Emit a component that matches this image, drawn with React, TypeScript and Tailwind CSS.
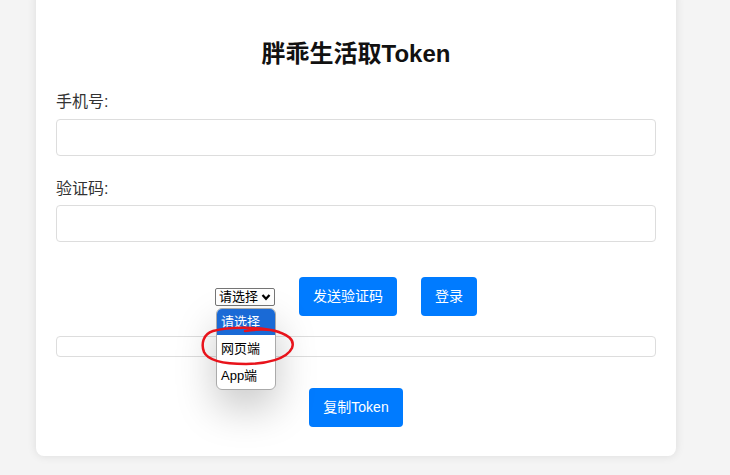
import React from 'react';

const font = { fontFamily: '"Liberation Sans", "Noto Sans CJK SC", sans-serif' };

function App() {
  return (
    <div className="min-h-screen bg-[#f4f4f4] overflow-hidden" style={font}>
      <div className="ml-[36px] w-[640px] -mt-[10px] bg-white rounded-lg shadow-[0_0_10px_rgba(0,0,0,0.1)] px-5 pt-[50px] pb-[29px]">
        <h2 className="text-center text-[24px] leading-[28px] font-bold text-[#111]">胖乖生活取Token</h2>

        <label className="block mt-[22px] text-[16px] leading-[24px] text-[#333]">手机号:</label>
        <input className="block mt-[5px] w-full h-[37px] border border-[#ddd] rounded" />

        <label className="block mt-[21px] text-[16px] leading-[24px] text-[#333]">验证码:</label>
        <input className="block mt-[4px] w-full h-[37px] border border-[#ddd] rounded" />

        <div className="mt-[35px] flex items-center justify-center gap-6 pr-[20px]">
          <div className="relative">
            <div className="flex items-center gap-[3px] h-[18px] pl-[3px] pr-[3px] border border-[#767676] rounded-[2px] text-[13px] leading-[16px] text-black">
              请选择
              <svg width="10" height="10" viewBox="0 0 10 10">
                <path d="M1.5 3 L5 6.8 L8.5 3" fill="none" stroke="#000" strokeWidth="2.2" />
              </svg>
            </div>
            <div className="absolute left-[1px] top-[20px] w-[60px] bg-white border border-[#aaa] rounded-[6px] overflow-hidden shadow-[0_18px_40px_rgba(0,0,0,0.22)] text-[13px] text-black z-10">
              <div className="h-[26px] leading-[26px] px-[4px] bg-[#1a6ad6] text-white">请选择</div>
              <div className="h-[27px] leading-[27px] px-[4px]">网页端</div>
              <div className="h-[27px] leading-[27px] px-[4px]">App端</div>
            </div>
            <svg className="absolute left-[-14px] top-[36px] z-20 pointer-events-none" width="96" height="44" viewBox="0 0 96 44">
              <path
                d="M78 8 C62 3 30 2 12 7 C2 10 0 20 3 28 C7 37 25 40 45 40 C65 40 86 35 91 24 C94 16 88 10 70 6 C62 5 50 6 44 7"
                fill="none"
                stroke="#e8131b"
                strokeWidth="2.5"
                strokeLinecap="round"
              />
            </svg>
          </div>
          <button className="h-[39px] px-[14px] bg-[#007bff] text-white text-[14px] rounded">发送验证码</button>
          <button className="h-[39px] px-[14px] bg-[#007bff] text-white text-[14px] rounded">登录</button>
        </div>

        <div className="mt-[20px] h-[21px] border border-[#ddd] rounded" />

        <div className="mt-[31px] flex justify-center">
          <button className="h-[39px] px-[14px] bg-[#007bff] text-white text-[14px] rounded">复制Token</button>
        </div>
      </div>
    </div>
  );
}

export default App;
